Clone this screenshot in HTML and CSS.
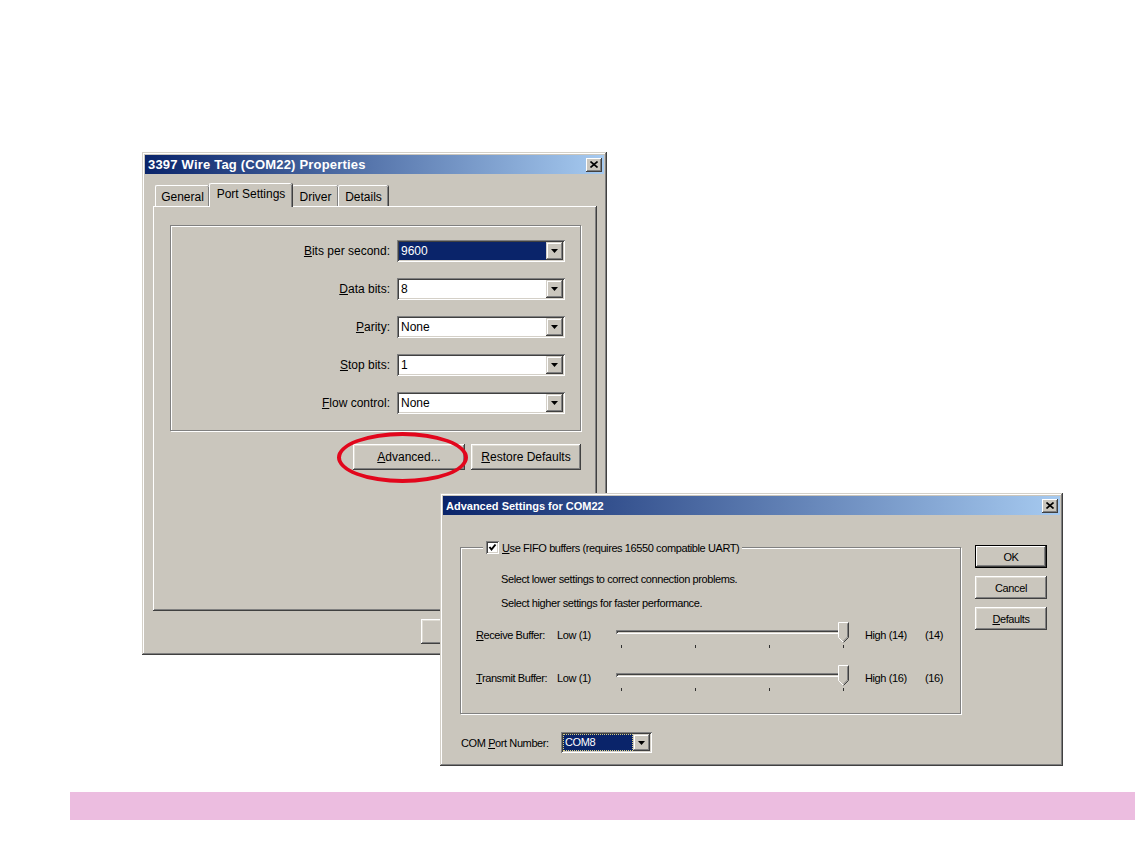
FILE: index.html
```html
<!DOCTYPE html>
<html lang="en">
<head>
  <meta charset="UTF-8">
  <title>Port Settings</title>
  <link rel="stylesheet" href="styles.css">
</head>
<body>
  <div class="desktop">

    <!-- Device properties dialog -->
    <div class="window props">
      <div class="titlebar">
        <span class="title-text">3397 Wire Tag (COM22) Properties</span>
        <span class="close-btn">
          <svg width="8" height="7" viewBox="0 0 8 7"><path d="M0.5 0.5 L7.5 6.5 M7.5 0.5 L0.5 6.5" stroke="#000" stroke-width="1.6"/></svg>
        </span>
      </div>

      <div class="tabs">
        <div class="tab tab-general">General</div>
        <div class="tab tab-port active">Port Settings</div>
        <div class="tab tab-driver">Driver</div>
        <div class="tab tab-details">Details</div>
      </div>

      <div class="tab-panel">
        <div class="group">
          <div class="field-grid">
            <label><u>B</u>its per second:</label>
            <div class="combo selected">
              <span class="combo-value">9600</span>
              <span class="combo-btn"><svg width="7" height="4" viewBox="0 0 7 4"><polygon points="0,0 7,0 3.5,4" fill="#000"/></svg></span>
            </div>

            <label><u>D</u>ata bits:</label>
            <div class="combo">
              <span class="combo-value">8</span>
              <span class="combo-btn"><svg width="7" height="4" viewBox="0 0 7 4"><polygon points="0,0 7,0 3.5,4" fill="#000"/></svg></span>
            </div>

            <label><u>P</u>arity:</label>
            <div class="combo">
              <span class="combo-value">None</span>
              <span class="combo-btn"><svg width="7" height="4" viewBox="0 0 7 4"><polygon points="0,0 7,0 3.5,4" fill="#000"/></svg></span>
            </div>

            <label><u>S</u>top bits:</label>
            <div class="combo">
              <span class="combo-value">1</span>
              <span class="combo-btn"><svg width="7" height="4" viewBox="0 0 7 4"><polygon points="0,0 7,0 3.5,4" fill="#000"/></svg></span>
            </div>

            <label><u>F</u>low control:</label>
            <div class="combo">
              <span class="combo-value">None</span>
              <span class="combo-btn"><svg width="7" height="4" viewBox="0 0 7 4"><polygon points="0,0 7,0 3.5,4" fill="#000"/></svg></span>
            </div>
          </div>
        </div>

        <div class="panel-actions">
          <button class="btn btn-advanced"><u>A</u>dvanced...</button>
          <button class="btn btn-restore"><u>R</u>estore Defaults</button>
        </div>
      </div>

      <div class="dialog-actions">
        <button class="btn btn-wide">OK</button>
        <button class="btn btn-wide">Cancel</button>
      </div>
    </div>

    <!-- callout around the Advanced button -->
    <div class="callout-ring"></div>

    <!-- Advanced settings dialog -->
    <div class="window advanced">
      <div class="titlebar small">
        <span class="title-text">Advanced Settings for COM22</span>
        <span class="close-btn">
          <svg width="8" height="7" viewBox="0 0 8 7"><path d="M0.5 0.5 L7.5 6.5 M7.5 0.5 L0.5 6.5" stroke="#000" stroke-width="1.6"/></svg>
        </span>
      </div>

      <div class="adv-body">
        <div class="adv-main">
          <fieldset class="fifo">
            <legend>
              <span class="checkbox">
                <svg width="9" height="9" viewBox="0 0 9 9"><polyline points="1.5,4 3.5,6.5 7.5,1.5" fill="none" stroke="#000" stroke-width="2"/></svg>
              </span>
              <span><u>U</u>se FIFO buffers (requires 16550 compatible UART)</span>
            </legend>

            <p class="hint hint-first">Select lower settings to correct connection problems.</p>
            <p class="hint">Select higher settings for faster performance.</p>

            <div class="buffer-row row-receive">
              <span class="cell"><u>R</u>eceive Buffer:</span>
              <span class="cell">Low (1)</span>
              <div class="slider">
                <div class="track"></div>
                <svg class="thumb" width="11" height="21" viewBox="0 0 11 21">
                  <polygon points="0.5,0.5 10.5,0.5 10.5,15.5 5.5,20.5 0.5,15.5" fill="#cac6bd"/>
                  <polyline points="5.5,20.5 0.5,15.5 0.5,0.5 10.5,0.5" fill="none" stroke="#fff"/>
                  <polyline points="10.5,0.5 10.5,15.5 5.5,20.5" fill="none" stroke="#404040"/>
                  <polyline points="9.5,1.5 9.5,15 5.5,19" fill="none" stroke="#808080"/>
                </svg>
                <div class="ticks"><i></i><i></i><i></i><i></i></div>
              </div>
              <span class="cell high">High (14)</span>
              <span class="cell">(14)</span>
            </div>

            <div class="buffer-row row-transmit">
              <span class="cell"><u>T</u>ransmit Buffer:</span>
              <span class="cell">Low (1)</span>
              <div class="slider">
                <div class="track"></div>
                <svg class="thumb" width="11" height="21" viewBox="0 0 11 21">
                  <polygon points="0.5,0.5 10.5,0.5 10.5,15.5 5.5,20.5 0.5,15.5" fill="#cac6bd"/>
                  <polyline points="5.5,20.5 0.5,15.5 0.5,0.5 10.5,0.5" fill="none" stroke="#fff"/>
                  <polyline points="10.5,0.5 10.5,15.5 5.5,20.5" fill="none" stroke="#404040"/>
                  <polyline points="9.5,1.5 9.5,15 5.5,19" fill="none" stroke="#808080"/>
                </svg>
                <div class="ticks"><i></i><i></i><i></i><i></i></div>
              </div>
              <span class="cell high">High (16)</span>
              <span class="cell">(16)</span>
            </div>
          </fieldset>

          <div class="port-row">
            <span class="port-label">COM <u>P</u>ort Number:</span>
            <div class="combo port-combo selected focused">
              <span class="combo-value">COM8</span>
              <span class="combo-btn"><svg width="7" height="4" viewBox="0 0 7 4"><polygon points="0,0 7,0 3.5,4" fill="#000"/></svg></span>
            </div>
          </div>
        </div>

        <div class="adv-buttons">
          <button class="btn btn-small default">OK</button>
          <button class="btn btn-small">Cancel</button>
          <button class="btn btn-small"><u>D</u>efaults</button>
        </div>
      </div>
    </div>
  </div>

  <div class="footer-bar"></div>
</body>
</html>
```

FILE: styles.css
```css
/* Base */
body {
  margin: 0;
  background: #fff;
  font-family: "Liberation Sans", Arial, sans-serif;
  font-size: 12px;
  color: #000;
}

u {
  text-decoration: underline;
  text-underline-offset: 1px;
}

/* Desktop area holding the two dialogs */
.desktop {
  position: relative;
  height: 792px;
}

/* Classic window frame */
.window {
  position: absolute;
  box-sizing: border-box;
  padding: 3px;
  background: #cac6bd;
  box-shadow: inset -1px -1px #404040, inset 1px 1px #d4d0c8,
              inset -2px -2px #808080, inset 2px 2px #fff;
  display: flex;
  flex-direction: column;
}

.props {
  left: 142px;
  top: 152px;
  width: 465px;
  height: 503px;
  z-index: 1;
}

.advanced {
  left: 440px;
  top: 493px;
  width: 623px;
  height: 273px;
  z-index: 3;
  font-size: 11px;
  letter-spacing: -0.4px;
}

/* Title bar */
.titlebar {
  height: 19px;
  flex: none;
  display: flex;
  align-items: center;
  justify-content: space-between;
  padding: 0 2px 0 3px;
  background: linear-gradient(to right, #0a246a, #a6caf0);
  color: #fff;
  font-weight: bold;
  font-size: 13px;
  letter-spacing: 0.2px;
}

.titlebar.small {
  font-size: 11px;
  letter-spacing: 0;
}

.close-btn {
  width: 16px;
  height: 14px;
  display: flex;
  align-items: center;
  justify-content: center;
  background: #cac6bd;
  box-shadow: inset -1px -1px #404040, inset 1px 1px #fff,
              inset -2px -2px #808080;
}

/* Tabs */
.tabs {
  display: flex;
  align-items: flex-end;
  margin-top: 9px;
  padding-left: 10px;
  height: 23px;
}

.tab {
  box-sizing: border-box;
  height: 21px;
  padding-top: 4px;
  text-align: center;
  border-top: 1px solid #fff;
  border-left: 1px solid #fff;
  border-radius: 2px 2px 0 0;
  box-shadow: inset -1px 0 #808080, 1px 0 #404040;
}

.tab.active {
  height: 24px;
  margin-bottom: -1px;
  padding-top: 3px;
  position: relative;
  z-index: 2;
  background: #cac6bd;
}

.tab-general { width: 54px; }
.tab-port { width: 83px; }
.tab-driver { width: 46px; }
.tab-details { width: 50px; }

.tab-panel {
  height: 405px;
  margin: 0 7px 0 8px;
  box-shadow: inset -1px -1px #404040, inset 1px 1px #fff,
              inset -2px -2px #808080;
  display: flex;
  flex-direction: column;
}

/* Etched group box */
.group {
  margin: 19px 16px 0 17px;
  border: 1px solid #808080;
  box-shadow: inset 1px 1px #fff, 1px 1px #fff;
}

.field-grid {
  display: grid;
  grid-template-columns: 1fr 168px;
  column-gap: 7px;
  row-gap: 16px;
  align-items: center;
  padding: 14px 15px 16px 0;
}

.field-grid label {
  text-align: right;
}

/* Combo boxes */
.combo {
  box-sizing: border-box;
  height: 22px;
  padding: 2px;
  display: flex;
  background: #fff;
  box-shadow: inset 1px 1px #808080, inset -1px -1px #fff,
              inset 2px 2px #404040, inset -2px -2px #d4d0c8;
}

.combo-value {
  flex: 1;
  padding-left: 2px;
  line-height: 18px;
}

.combo.selected .combo-value {
  background: #0a246a;
  color: #fff;
}

.combo.focused .combo-value {
  outline: 1px dotted #d8cf80;
  outline-offset: -1px;
}

.combo-btn {
  width: 17px;
  display: flex;
  align-items: center;
  justify-content: center;
  background: #cac6bd;
  box-shadow: inset -1px -1px #404040, inset 1px 1px #d4d0c8,
              inset -2px -2px #808080, inset 2px 2px #fff;
}

/* Push buttons */
.btn {
  box-sizing: border-box;
  font: inherit;
  letter-spacing: inherit;
  color: #000;
  background: #cac6bd;
  border: none;
  padding: 0;
  box-shadow: inset -1px -1px #404040, inset 1px 1px #fff,
              inset -2px -2px #808080, inset 2px 2px #dfdcd4;
}

.panel-actions {
  display: flex;
  justify-content: flex-end;
  gap: 6px;
  margin-top: 13px;
  padding-right: 16px;
}

.btn-advanced { width: 112px; height: 26px; }
.btn-restore { width: 110px; height: 26px; }

.dialog-actions {
  display: flex;
  justify-content: flex-end;
  gap: 16px;
  margin-top: 8px;
  padding-right: 7px;
}

.btn-wide {
  width: 80px;
  height: 25px;
}

/* Red callout drawn over the first dialog */
.callout-ring {
  position: absolute;
  left: 337px;
  top: 432px;
  width: 131px;
  height: 51px;
  box-sizing: border-box;
  border: 4px solid #e2061c;
  border-radius: 50%;
  z-index: 2;
}

/* Advanced settings body */
.adv-body {
  flex: 1;
  display: flex;
  gap: 14px;
  padding-left: 17px;
}

.adv-main {
  width: 501px;
}

.fifo {
  margin: 25px 0 0;
  padding: 0 15px 20px;
  border: 1px solid #808080;
  box-shadow: inset 1px 1px #fff, 1px 1px #fff;
  min-width: 0;
}

.fifo legend {
  display: flex;
  align-items: center;
  gap: 3px;
  margin-left: 7px;
  padding: 0 3px;
  height: 15px;
  background: #cac6bd;
}

.checkbox {
  box-sizing: border-box;
  width: 13px;
  height: 13px;
  display: flex;
  align-items: center;
  justify-content: center;
  background: #fff;
  box-shadow: inset 1px 1px #808080, inset -1px -1px #fff,
              inset 2px 2px #404040, inset -2px -2px #d4d0c8;
}

.hint {
  margin: 9px 0 0 25px;
  line-height: 15px;
}

.hint-first {
  margin-top: 17px;
}

.buffer-row {
  display: grid;
  grid-template-columns: 81px 59px 233px 76px auto;
  height: 30px;
  margin-top: 9px;
}

.row-transmit {
  margin-top: 13px;
}

.buffer-row .cell {
  justify-self: start;
  white-space: nowrap;
  padding-top: 8px;
  line-height: 14px;
}

.buffer-row .high {
  padding-left: 16px;
}

/* Trackbar */
.slider {
  position: relative;
}

.track {
  box-sizing: border-box;
  height: 4px;
  margin-top: 10px;
  box-shadow: inset 1px 1px #808080, inset -1px -1px #fff,
              inset 2px 2px #404040, inset -2px -2px #d4d0c8;
}

.thumb {
  position: absolute;
  right: 0;
  top: 2px;
}

.ticks {
  display: flex;
  justify-content: space-between;
  margin-top: 11px;
  padding: 0 5px;
}

.ticks i {
  width: 1px;
  height: 3px;
  background: #303030;
}

/* COM port selector */
.port-row {
  display: flex;
  align-items: center;
  margin-top: 18px;
  padding-left: 1px;
}

.port-label {
  width: 100px;
}

.port-combo {
  width: 91px;
  height: 21px;
}

.port-combo .combo-value {
  line-height: 17px;
}

/* Right-hand button column */
.adv-buttons {
  display: flex;
  flex-direction: column;
  gap: 8px;
  margin-top: 30px;
}

.btn-small {
  width: 72px;
  height: 23px;
}

.btn-small.default {
  box-shadow: inset 0 0 0 1px #000, inset -2px -2px #404040,
              inset 2px 2px #fff, inset -3px -3px #808080;
}

/* Bottom strip */
.footer-bar {
  height: 28px;
  margin-left: 70px;
  background: #ecbde0;
}
```
